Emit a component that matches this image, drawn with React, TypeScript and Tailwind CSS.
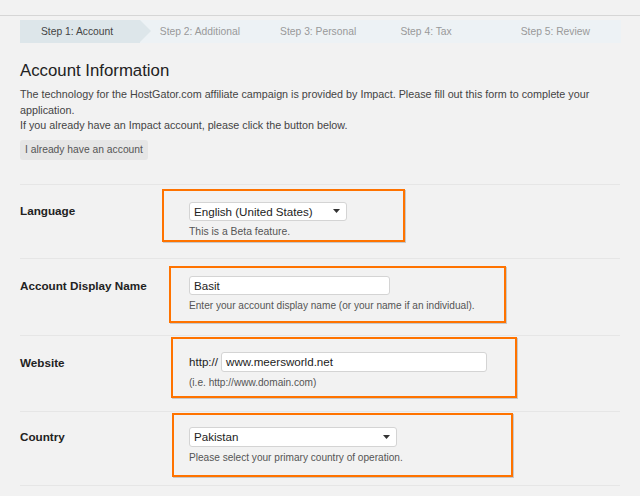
import React from "react";

const font = { fontFamily: '"Liberation Sans", Arial, sans-serif' };

function Caret() {
  return (
    <svg width="7" height="4" viewBox="0 0 7 4" className="shrink-0">
      <path d="M0 0 L7 0 L3.5 4 Z" fill="#333" />
    </svg>
  );
}

function Steps() {
  const rest = ["Step 2: Additional", "Step 3: Personal", "Step 4: Tax", "Step 5: Review"];
  return (
    <div className="flex h-[23px] w-[601px] items-center bg-[#edf2f5] text-[10.3px]">
      <div className="relative flex h-full w-[120px] items-center bg-[#dde6ea] pl-[21px] text-[#444]">
        Step 1: Account
        <div className="absolute left-full top-0 h-0 w-0 border-y-[11.5px] border-l-[11px] border-y-transparent border-l-[#dde6ea]" />
      </div>
      {rest.map((s) => (
        <div key={s} className="w-[120.5px] pl-[20px] text-[#999]">
          {s}
        </div>
      ))}
    </div>
  );
}

export default function App() {
  return (
    <div className="h-[496px] w-[640px] overflow-hidden bg-[#f2f2f2] text-[#222]" style={font}>
      <div className="h-[15px]" />
      <div className="h-px w-full bg-[#d6d6d6]" />
      <div className="px-[20px] pt-[4px]">
        <Steps />
        <h1 className="mt-[17px] text-[16.8px] leading-[22px] text-[#222]">Account Information</h1>
        <div className="mt-[5px] text-[10.75px] leading-[15.5px] text-[#444]">
          <p>
            The technology for the HostGator.com affiliate campaign is provided by Impact. Please fill out this form to complete your application.
          </p>
          <p>If you already have an Impact account, please click the button below.</p>
        </div>
        <button className="mt-[6px] h-[20px] rounded-[3px] bg-[#e6e6e6] px-[5px] text-[10.3px] text-[#555]">
          I already have an account
        </button>

        <div className="mt-[24px] w-[600px]">
          {/* Language */}
          <div className="relative flex h-[74px] border-t border-[#e6e6e6]">
            <div className="w-[169px] pt-[17px] text-[11.7px] font-bold">Language</div>
            <div className="pt-[17px]">
              <div className="flex h-[19px] w-[158px] items-center justify-between rounded-[3px] border border-[#d4d4d4] bg-white pl-[4px] pr-[6px] text-[11.6px] text-[#222]">
                English (United States)
                <Caret />
              </div>
              <div className="mt-[3px] text-[10.4px] text-[#555]">This is a Beta feature.</div>
            </div>
            <div className="pointer-events-none absolute left-[142px] top-[4px] h-[53px] w-[243px] border-2 border-[#ff7300] shadow-[1px_1px_0_#c8c8c8]" />
          </div>

          {/* Account Display Name */}
          <div className="relative flex h-[77px] border-t border-[#e6e6e6]">
            <div className="w-[169px] pt-[18px] text-[11.7px] font-bold">Account Display Name</div>
            <div className="pt-[17px]">
              <div className="flex h-[19px] w-[201px] items-center rounded-[3px] border border-[#d4d4d4] bg-white pl-[4px] text-[11.6px] text-[#222]">
                Basit
              </div>
              <div className="mt-[3px] text-[10.1px] text-[#555]">
                Enter your account display name (or your name if an individual).
              </div>
            </div>
            <div className="pointer-events-none absolute left-[149px] top-[7px] h-[57px] w-[337px] border-2 border-[#ff7300] shadow-[1px_1px_0_#c8c8c8]" />
          </div>

          {/* Website */}
          <div className="relative flex h-[76px] border-t border-[#e6e6e6]">
            <div className="w-[169px] pt-[18px] text-[11.7px] font-bold">Website</div>
            <div className="pt-[16px]">
              <div className="flex items-center">
                <span className="mr-[3px] text-[11.6px] text-[#222]">http://</span>
                <div className="flex h-[20px] w-[266px] items-center rounded-[3px] border border-[#d4d4d4] bg-white pl-[4px] text-[11.6px] text-[#222]">
                  www.meersworld.net
                </div>
              </div>
              <div className="mt-[3px] text-[10.1px] text-[#555]">(i.e. http://www.domain.com)</div>
            </div>
            <div className="pointer-events-none absolute left-[151px] top-[1px] h-[61px] w-[346px] border-2 border-[#ff7300] shadow-[1px_1px_0_#c8c8c8]" />
          </div>

          {/* Country */}
          <div className="relative flex h-[75px] border-y border-[#e6e6e6]">
            <div className="w-[169px] pt-[16px] text-[11.7px] font-bold">Country</div>
            <div className="pt-[15px]">
              <div className="flex h-[20px] w-[208px] items-center justify-between rounded-[3px] border border-[#d4d4d4] bg-white pl-[4px] pr-[6px] text-[11.6px] text-[#222]">
                Pakistan
                <Caret />
              </div>
              <div className="mt-[3px] text-[10.1px] text-[#555]">Please select your primary country of operation.</div>
            </div>
            <div className="pointer-events-none absolute left-[152px] top-[1px] h-[64px] w-[341px] border-2 border-[#ff7300] shadow-[1px_1px_0_#c8c8c8]" />
          </div>
        </div>
      </div>
    </div>
  );
}
